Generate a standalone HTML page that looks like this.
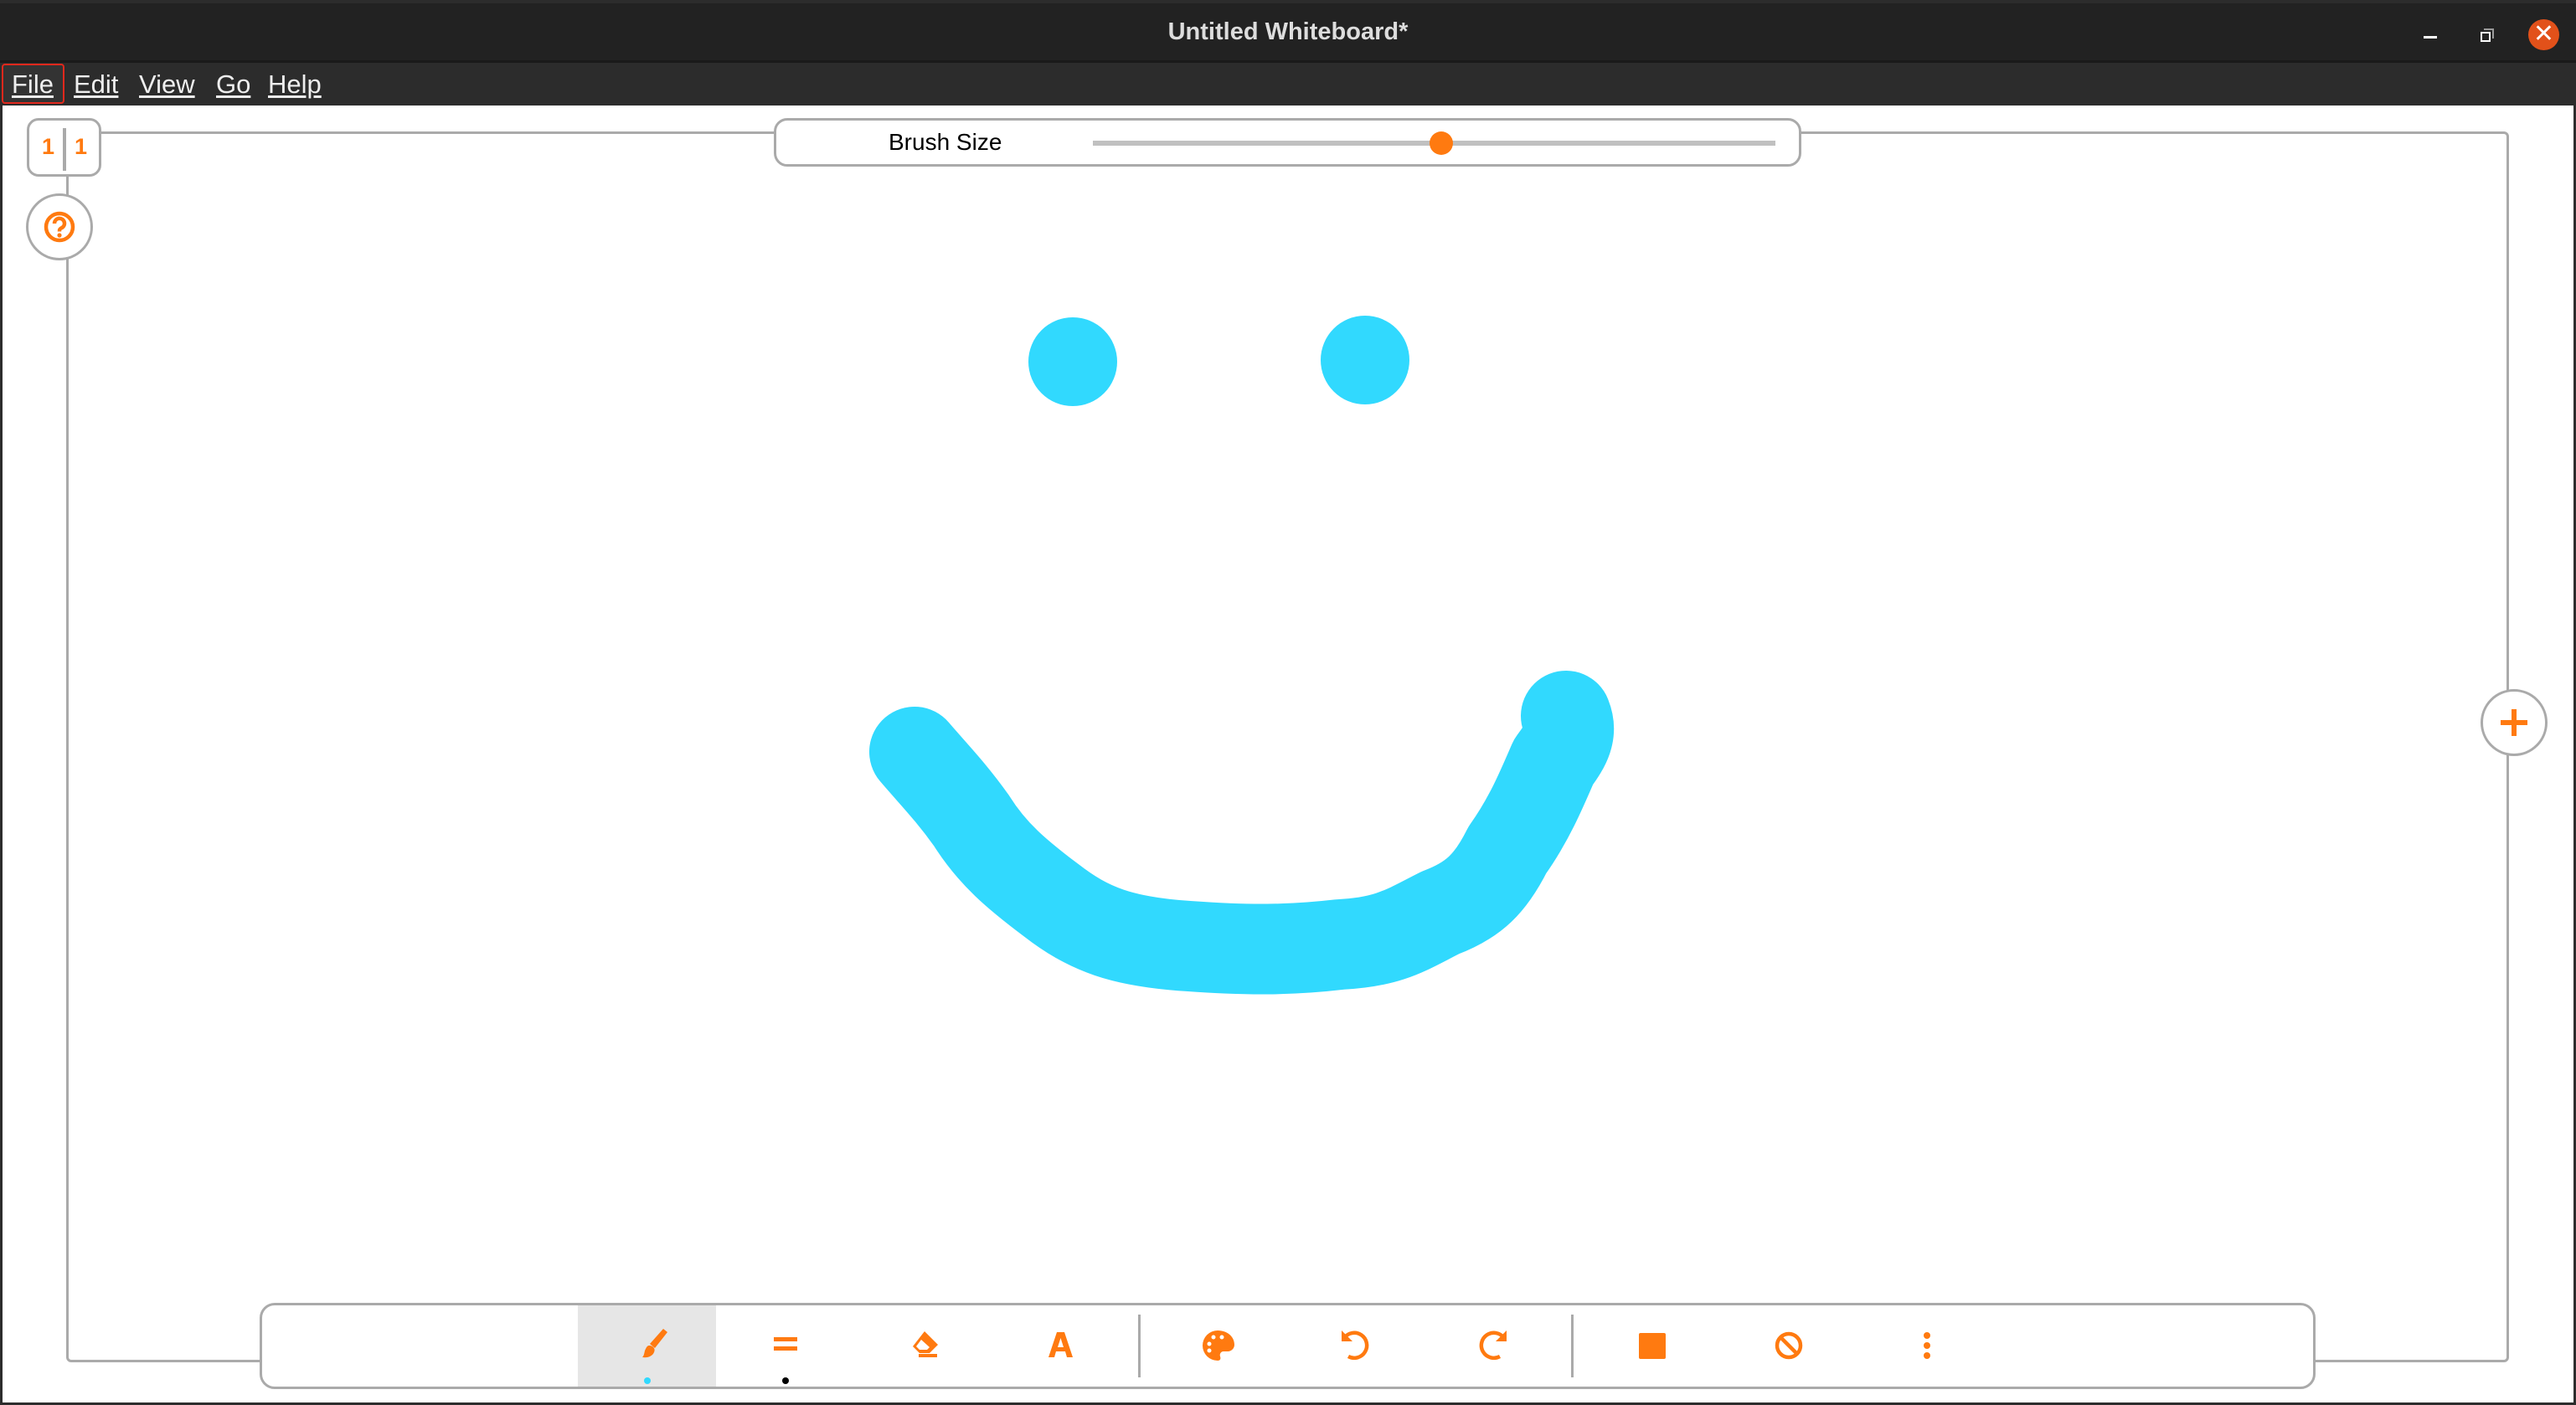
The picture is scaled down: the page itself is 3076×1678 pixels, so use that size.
<!DOCTYPE html>
<html><head><meta charset="utf-8"><style>
*{margin:0;padding:0;box-sizing:border-box}
body{width:3076px;height:1678px;background:#fff;position:relative;overflow:hidden;font-family:"Liberation Sans",sans-serif}
.title{position:absolute;left:0;top:0;width:3076px;height:75px;background:#222;border-top:4px solid #2c2c2c;border-bottom:3px solid #1a1a1a}
.title span{position:absolute;left:0;width:100%;top:18px;text-align:center;color:#ddd;font-weight:bold;font-size:29px}
.menu{position:absolute;left:0;top:75px;width:3076px;height:51px;background:#2c2c2c}
.menu span{position:absolute;top:8px;color:#eee;font-size:31px;text-decoration:underline;text-underline-offset:3px}
.abs{position:absolute}
</style></head><body>
<div class="title"><span>Untitled Whiteboard*</span>
<div class="abs" style="left:2894px;top:39px;width:16px;height:3px;background:#fff"></div>
<div class="abs" style="left:2966px;top:30px;width:12px;height:12px;border:2px solid #999;border-left:none;border-bottom:none"></div>
<div class="abs" style="left:2962px;top:34px;width:12px;height:12px;border:2px solid #fff"></div>
<div class="abs" style="left:3019px;top:19px;width:37px;height:37px;border-radius:50%;background:#e2511a;color:#fff;font-size:30px;line-height:36px;text-align:center">✕</div>
</div>
<div class="menu">
<div class="abs" style="left:2px;top:1px;width:75px;height:48px;border:2px solid #e0281c;border-radius:4px;background:#333"></div>
<span style="left:14px">File</span><span style="left:88px">Edit</span><span style="left:166px">View</span><span style="left:258px">Go</span><span style="left:320px">Help</span>
</div>
<div class="abs" style="left:0;top:126px;width:3px;height:1552px;background:#2c2c2c"></div>
<div class="abs" style="right:0;top:126px;width:3px;height:1552px;background:#2c2c2c"></div>
<div class="abs" style="left:0;bottom:0;width:3076px;height:3px;background:#2c2c2c"></div>
<div class="abs" style="left:79px;top:157px;width:2917px;height:1470px;border:3px solid #aaa;border-radius:6px"></div>
<div class="abs" style="left:32px;top:141px;width:89px;height:70px;border:3px solid #aaa;border-radius:14px;background:#fff"></div>
<div class="abs" style="left:50px;top:160px;color:#ff7a10;font-weight:bold;font-size:27px">1</div>
<div class="abs" style="left:89px;top:160px;color:#ff7a10;font-weight:bold;font-size:27px">1</div>
<div class="abs" style="left:75px;top:153px;width:4px;height:51px;background:#aaa"></div>
<div class="abs" style="left:31px;top:231px;width:80px;height:80px;border:3px solid #aaa;border-radius:50%;background:#fff"></div>
<svg class="abs" style="left:51px;top:251px" width="40" height="40" viewBox="0 0 40 40"><circle cx="20" cy="20" r="16" fill="none" stroke="#ff7a10" stroke-width="4.5"/><path d="M14 16a6 6 0 1 1 8 5.5c-2 1-2 2-2 4" fill="none" stroke="#ff7a10" stroke-width="4.5"/><circle cx="20" cy="30" r="2.6" fill="#ff7a10"/></svg>
<div class="abs" style="left:924px;top:141px;width:1227px;height:58px;border:3px solid #aaa;border-radius:16px;background:#fff"></div>
<div class="abs" style="left:1061px;top:154px;font-size:28px;color:#000">Brush Size</div>
<div class="abs" style="left:1305px;top:168px;width:815px;height:6px;background:#c0c0c0"></div>
<div class="abs" style="left:1707px;top:157px;width:28px;height:28px;border-radius:50%;background:#ff7a10"></div>
<div class="abs" style="left:2962px;top:823px;width:80px;height:80px;border:3px solid #aaa;border-radius:50%;background:#fff"></div>
<div class="abs" style="left:2986px;top:860px;width:32px;height:6px;background:#ff7a10"></div>
<div class="abs" style="left:2999px;top:847px;width:6px;height:32px;background:#ff7a10"></div>
<svg class="abs" style="left:0;top:0" width="3076" height="1678">
<circle cx="1281" cy="432" r="53" fill="#31d9fe"/><circle cx="1630" cy="430" r="53" fill="#31d9fe"/>
<path d="M1092 898 C1115 925 1135 945 1160 980 C1185 1020 1215 1045 1255 1075 C1300 1110 1340 1125 1420 1130 C1490 1135 1540 1135 1600 1128 C1660 1125 1680 1110 1720 1090 C1760 1075 1780 1055 1800 1015 C1825 980 1840 945 1855 910 C1870 890 1878 875 1870 855" fill="none" stroke="#31d9fe" stroke-width="108" stroke-linecap="round" stroke-linejoin="round"/>
</svg>
<div class="abs" style="left:310px;top:1556px;width:2455px;height:103px;border:3px solid #aaa;border-radius:18px;background:#fff"></div>
<div class="abs" style="left:690px;top:1559px;width:165px;height:97px;background:#e6e6e6"></div>
<div class="abs" style="left:1359px;top:1570px;width:3px;height:75px;background:#aaa"></div>
<div class="abs" style="left:1876px;top:1570px;width:3px;height:75px;background:#aaa"></div>
<div class="abs" style="left:769px;top:1645px;width:8px;height:8px;border-radius:50%;background:#31d9fe"></div>
<div class="abs" style="left:934px;top:1645px;width:8px;height:8px;border-radius:50%;background:#000"></div>
<svg class="abs" style="left:0;top:0" width="3076" height="1678" fill="#ff7a10">
<path d="M792 1587 l5 4 -15 19 -6 -5z"/><path d="M775 1607 c5 0 8 4 6 8 c-2 5 -8 7 -14 6 c3 -3 2 -7 4 -10 c1 -2 2 -4 4 -4z"/>
<rect x="924" y="1597" width="28" height="5"/><rect x="924" y="1608" width="28" height="5"/>
<path d="M1104 1590 l16 16 -10 10 h-12 l-8 -8z M1100 1600 l-6 8 4 4 h9 l3 -3z" fill-rule="evenodd"/><rect x="1097" y="1617" width="22" height="4"/>
<path d="M1262 1591 h9 l10 30 h-7 l-2 -7 h-11 l-2 7 h-7z M1263 1609 h7 l-3.5 -11z" fill-rule="evenodd"/>
<path d="M1454 1589 a18 18 0 0 0 0 36 c3 0 4 -2 3 -5 c-1 -3 1 -6 4 -6 h5 a8 8 0 0 0 8 -8 c0 -10 -9 -17 -20 -17z"/>
<circle cx="1444" cy="1605" r="2.5" fill="#fff"/><circle cx="1449" cy="1597" r="2.5" fill="#fff"/><circle cx="1459" cy="1597" r="2.5" fill="#fff"/><circle cx="1444" cy="1613" r="2.5" fill="#fff"/>
<path d="M1605 1598 a15 15 0 1 1 5 22" fill="none" stroke="#ff7a10" stroke-width="4.5"/><path d="M1602 1589 v13 h13z"/>
<path d="M1796 1598 a15 15 0 1 0 -5 22" fill="none" stroke="#ff7a10" stroke-width="4.5"/><path d="M1799 1589 v13 h-13z"/>
<rect x="1957" y="1592" width="32" height="31" rx="2"/>
<circle cx="2136" cy="1607" r="14" fill="none" stroke="#ff7a10" stroke-width="4.5"/><path d="M2126 1597 l20 20" stroke="#ff7a10" stroke-width="4.5"/>
<circle cx="2301" cy="1595" r="4"/><circle cx="2301" cy="1607" r="4"/><circle cx="2301" cy="1619" r="4"/>
</svg>
</body></html>
